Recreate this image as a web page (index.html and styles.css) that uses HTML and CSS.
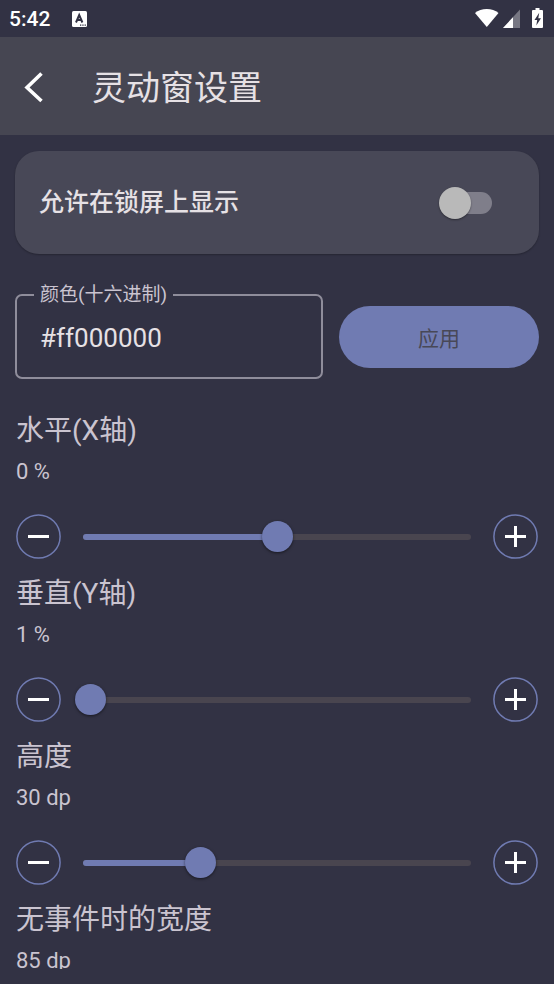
FILE: index.html
```html
<!DOCTYPE html>
<html lang="zh-CN">
<head>
<meta charset="utf-8">
<meta name="viewport" content="width=device-width, initial-scale=1">
<title>灵动窗设置</title>
<link rel="stylesheet" href="styles.css">
</head>
<body>
<div class="status-bar">
  <span>5:42</span>
  <svg class="notice" width="16" height="16" viewBox="0 0 16 16" aria-hidden="true"><rect width="15" height="16" rx="1.5" fill="#fff"/><path d="M4 11.500 7.200 4 10.400 11.500M5.200 9h4" fill="none" stroke="#323244" stroke-width="2"/><path d="M8 13.500h1.300v1.300H8zM10.300 13.500h1.300v1.300h-1.300zM12.600 13.500h1.300v1.300h-1.300z" fill="#323244"/></svg>
  <svg class="system" width="70" height="22" viewBox="0 0 70 22" aria-hidden="true">
    <path d="M0 5C6-.2 17.500-.2 23.500 5L11.800 19z" fill="#fff"/>
    <path d="M45 1.500V20H28z" fill="#777783"/><path d="M38 9.200V20H28z" fill="#fff"/>
    <path d="M60.500 0h4v2H67a1 1 0 0 1 1 1v16a1 1 0 0 1-1 1h-9a1 1 0 0 1-1-1V3a1 1 0 0 1 1-1h2.500z" fill="#fff"/>
    <path d="M64.200 4.800 59.500 12h2.700l-.9 5.600L66 10.200h-2.700z" fill="#323244"/>
  </svg>
</div>
<header class="app-bar">
  <button class="back" type="button" aria-label="返回"><svg width="22" height="32" viewBox="0 0 22 32"><path d="M19.500 1.500 5 15.500 19.500 29" fill="none" stroke="#fff" stroke-width="3.600"/></svg></button>
  <h1>灵动窗设置</h1>
</header>
<main>
  <label class="card"><span>允许在锁屏上显示</span><input class="switch" type="checkbox" role="switch"></label>
  <form class="color-row">
    <fieldset class="field">
      <legend><label for="color">颜色(十六进制)</label></legend>
      <input id="color" type="text" value="#ff000000" spellcheck="false">
    </fieldset>
    <button class="apply" type="button">应用</button>
  </form>

  <section class="setting">
    <h2 id="x-title">水平(X轴)</h2>
    <p>0 %</p>
    <div class="controls">
      <button class="step" type="button" aria-label="减少"><svg viewBox="0 0 45 45"><circle cx="22.500" cy="22.500" r="21.600"/><path d="M12 22.500h21"/></svg></button>
      <div class="slider" style="--value:50%"><input type="range" min="-50" max="50" value="0" aria-labelledby="x-title"></div>
      <button class="step" type="button" aria-label="增加"><svg viewBox="0 0 45 45"><circle cx="22.500" cy="22.500" r="21.600"/><path d="M12 22.500h21M22.500 12v21"/></svg></button>
    </div>
  </section>
  <section class="setting">
    <h2 id="y-title">垂直(Y轴)</h2>
    <p>1 %</p>
    <div class="controls">
      <button class="step" type="button" aria-label="减少"><svg viewBox="0 0 45 45"><circle cx="22.500" cy="22.500" r="21.600"/><path d="M12 22.500h21"/></svg></button>
      <div class="slider" style="--value:1%"><input type="range" min="0" max="100" value="1" aria-labelledby="y-title"></div>
      <button class="step" type="button" aria-label="增加"><svg viewBox="0 0 45 45"><circle cx="22.500" cy="22.500" r="21.600"/><path d="M12 22.500h21M22.500 12v21"/></svg></button>
    </div>
  </section>
  <section class="setting">
    <h2 id="height-title">高度</h2>
    <p>30 dp</p>
    <div class="controls">
      <button class="step" type="button" aria-label="减少"><svg viewBox="0 0 45 45"><circle cx="22.500" cy="22.500" r="21.600"/><path d="M12 22.500h21"/></svg></button>
      <div class="slider" style="--value:30%"><input type="range" min="0" max="100" value="30" aria-labelledby="height-title"></div>
      <button class="step" type="button" aria-label="增加"><svg viewBox="0 0 45 45"><circle cx="22.500" cy="22.500" r="21.600"/><path d="M12 22.500h21M22.500 12v21"/></svg></button>
    </div>
  </section>
  <section class="setting">
    <h2>无事件时的宽度</h2>
    <p>85 dp</p>
  </section>
</main>
</body>
</html>
```
FILE: styles.css
```css
:root {
  --bg: #323244;
  --primary: #707bb2;
  --text: #e6e1e5;
  --muted: #cac4d0;
}
* { box-sizing: border-box; }
body {
  margin: 0;
  height: 100vh;
  padding-bottom: 15px;
  display: flex;
  flex-direction: column;
  background: var(--bg);
  color: var(--text);
  font-family: Roboto, "Noto Sans CJK SC", sans-serif;
}
button, input { font: inherit; color: inherit; }
button { padding: 0; border: 0; background: none; cursor: pointer; }
h1, h2, p { margin: 0; font-weight: 400; }
svg { display: block; }

.status-bar {
  flex: none;
  height: 37px;
  padding: 0 9px;
  display: flex;
  align-items: center;
  color: #fff;
  font-size: 21px;
  font-weight: 500;
}
.notice { margin-left: 22px; }
.system { margin-left: auto; }

.app-bar {
  flex: none;
  height: 98px;
  padding: 4px 22px 0;
  display: flex;
  align-items: center;
  gap: 48px;
  background: #464652;
}
.app-bar h1 { font-size: 34px; line-height: 48px; }

main {
  flex: 1;
  min-height: 0;
  padding: 16px 15px 0;
  overflow-y: auto;
  scrollbar-width: none;
}
.card {
  height: 103px;
  padding: 0 47px 0 24px;
  display: flex;
  align-items: center;
  justify-content: space-between;
  border-radius: 24px;
  background: #484857;
  box-shadow: 0 1px 2px #0004;
  font-size: 25px;
  line-height: 32px;
  font-weight: 500;
}
.switch {
  appearance: none;
  position: relative;
  width: 50px;
  height: 22px;
  margin: 0;
  border-radius: 11px;
  background: #7f7e8a;
}
.switch::before {
  content: "";
  position: absolute;
  left: -3px;
  top: -5px;
  width: 32px;
  height: 32px;
  border-radius: 50%;
  background: #b9b9b9;
  box-shadow: 0 1px 2px #0006;
}
.switch:checked::before { left: 21px; background: var(--primary); }

.color-row {
  margin-top: 30px;
  display: grid;
  grid-template-columns: 20fr 13fr;
  align-items: center;
  gap: 16px;
}
.field {
  min-width: 0;
  height: 95px;
  margin: 0;
  padding: 0 18px;
  border: 2px solid #8f8d9b;
  border-radius: 7px;
}
.field legend {
  padding: 1px 6px 0;
  margin-left: -1px;
  color: var(--muted);
  font-size: 19px;
  line-height: 20px;
}
.field input {
  width: 100%;
  height: 66px;
  padding: 0 5px;
  border: 0;
  outline: 0;
  background: none;
  font-size: 26px;
}
.apply {
  height: 62px;
  margin-top: 10px;
  border-radius: 31px;
  background: var(--primary);
  color: #484857;
  font-size: 21px;
}

.setting { margin: 0 1px 14px; color: var(--muted); }
.color-row + .setting { margin-top: 31px; }
.setting h2 { font-size: 28px; line-height: 42px; }
.setting p { margin-top: 8px; font-size: 22px; line-height: 24px; }
.controls {
  margin-top: 30px;
  display: flex;
  align-items: center;
  gap: 22px;
}
.step { flex: none; width: 45px; height: 45px; }
.step circle { fill: none; stroke: var(--primary); stroke-width: 1.5; }
.step path { stroke: #fff; stroke-width: 3; }

.slider { position: relative; flex: 1; height: 31px; }
.slider::before, .slider::after {
  content: "";
  position: absolute;
  left: 0;
  top: 13px;
  width: 100%;
  height: 6px;
  border-radius: 3px;
  background: #49454f;
}
.slider::after { width: var(--value); background: var(--primary); }
.slider input {
  appearance: none;
  position: relative;
  z-index: 1;
  display: block;
  width: calc(100% + 24px);
  height: 31px;
  margin: 0 -12px;
  background: none;
}
.slider input::-webkit-slider-thumb {
  appearance: none;
  width: 31px;
  height: 31px;
  border-radius: 50%;
  background: var(--primary);
  box-shadow: 0 1px 3px #0008;
}
```
